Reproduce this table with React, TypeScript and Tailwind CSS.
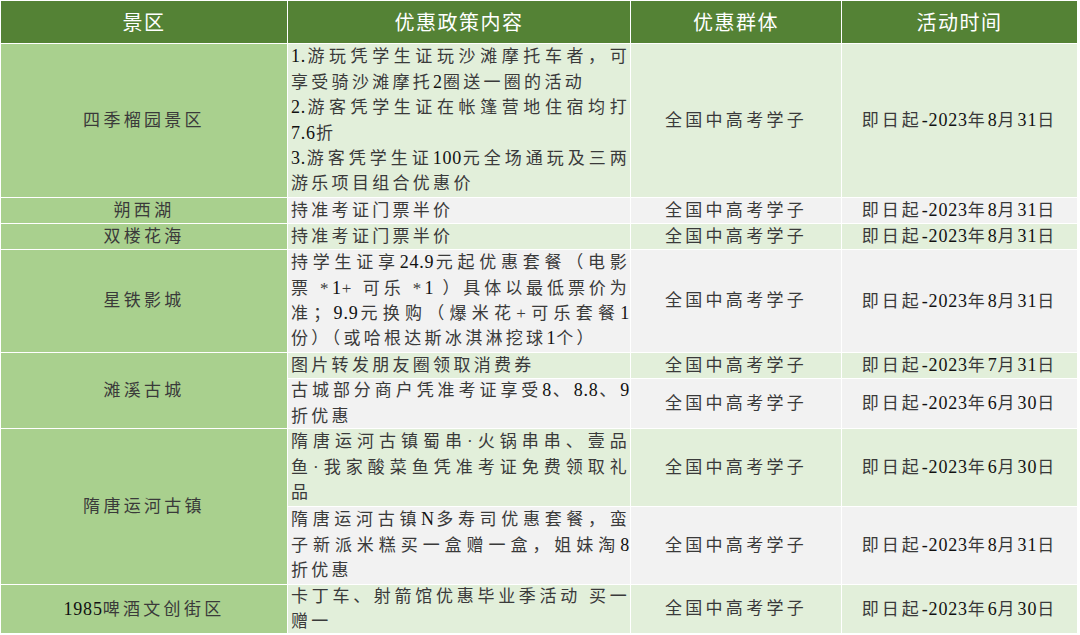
import React from "react";

type Line = { t: string; j?: boolean };
type Sub = { lines: Line[]; time: string };
type Row = { name: string; subs: Sub[] };

const rows: Row[] = [
  {
    name: "四季榴园景区",
    subs: [
      {
        lines: [
          { t: "1.游玩凭学生证玩沙滩摩托车者，可", j: true },
          { t: "享受骑沙滩摩托2圈送一圈的活动" },
          { t: "2.游客凭学生证在帐篷营地住宿均打", j: true },
          { t: "7.6折" },
          { t: "3.游客凭学生证100元全场通玩及三两", j: true },
          { t: "游乐项目组合优惠价" },
        ],
        time: "即日起-2023年8月31日",
      },
    ],
  },
  { name: "朔西湖", subs: [{ lines: [{ t: "持准考证门票半价" }], time: "即日起-2023年8月31日" }] },
  { name: "双楼花海", subs: [{ lines: [{ t: "持准考证门票半价" }], time: "即日起-2023年8月31日" }] },
  {
    name: "星铁影城",
    subs: [
      {
        lines: [
          { t: "持学生证享24.9元起优惠套餐（电影", j: true },
          { t: "票 *1+ 可乐 *1 ）具体以最低票价为", j: true },
          { t: "准；9.9元换购（爆米花+可乐套餐1", j: true },
          { t: "份）（或哈根达斯冰淇淋挖球1个）" },
        ],
        time: "即日起-2023年8月31日",
      },
    ],
  },
  {
    name: "滩溪古城",
    subs: [
      { lines: [{ t: "图片转发朋友圈领取消费券" }], time: "即日起-2023年7月31日" },
      {
        lines: [{ t: "古城部分商户凭准考证享受8、8.8、9", j: true }, { t: "折优惠" }],
        time: "即日起-2023年6月30日",
      },
    ],
  },
  {
    name: "隋唐运河古镇",
    subs: [
      {
        lines: [
          { t: "隋唐运河古镇蜀串·火锅串串、壹品", j: true },
          { t: "鱼·我家酸菜鱼凭准考证免费领取礼", j: true },
          { t: "品" },
        ],
        time: "即日起-2023年6月30日",
      },
      {
        lines: [
          { t: "隋唐运河古镇N多寿司优惠套餐，蛮", j: true },
          { t: "子新派米糕买一盒赠一盒，姐妹淘8", j: true },
          { t: "折优惠" },
        ],
        time: "即日起-2023年8月31日",
      },
    ],
  },
  {
    name: "1985啤酒文创街区",
    subs: [
      {
        lines: [{ t: "卡丁车、射箭馆优惠毕业季活动 买一", j: true }, { t: "赠一" }],
        time: "即日起-2023年6月30日",
      },
    ],
  },
];

function Txt({ s }: { s: string }) {
  const parts = s.match(/[0-9A-Za-z.\-]+|[^0-9A-Za-z.\-]+/g) || [];
  return (
    <>
      {parts.map((p, i) =>
        /^[0-9A-Za-z.\-]+$/.test(p) ? (
          <span key={i} className="text-[18px] tracking-[0.8px] text-[#111]">
            {p}
          </span>
        ) : (
          <span key={i}>{p}</span>
        )
      )}
    </>
  );
}

const rowBg = (i: number) => (i % 2 === 0 ? "bg-[#e2efda]" : "bg-[#f2f2f2]");

export default function App() {
  let subIdx = 0;
  const cells: React.ReactNode[] = [];
  rows.forEach((r, ri) => {
    r.subs.forEach((s, si) => {
      const bg = rowBg(subIdx);
      subIdx++;
      if (si === 0) {
        cells.push(
          <div
            key={`n${ri}`}
            className={`flex items-center justify-center bg-[#a9d08e] ${r.subs.length === 2 ? "row-span-2" : ""}`}
          >
            <span className="tracking-[3.3px]">
              <Txt s={r.name} />
            </span>
          </div>
        );
      }
      cells.push(
        <div key={`c${ri}-${si}`} className={`flex flex-col justify-center pl-[3px] pr-[0px] ${bg}`}>
          {s.lines.map((l, li) => (
            <div
              key={li}
              className={`leading-[25.4px] tracking-[3.3px] whitespace-nowrap ${l.j ? "text-justify [text-align-last:justify]" : ""}`}
            >
              <Txt s={l.t} />
            </div>
          ))}
        </div>
      );
      cells.push(
        <div key={`g${ri}-${si}`} className={`flex items-center justify-center ${bg}`}>
          <span className="tracking-[3.3px]">全国中高考学子</span>
        </div>
      );
      cells.push(
        <div key={`t${ri}-${si}`} className={`flex items-center justify-center ${bg}`}>
          <span className="tracking-[3px]">
            <Txt s={s.time} />
          </span>
        </div>
      );
    });
  });

  return (
    <div className="w-[1080px] h-[635px] bg-white overflow-hidden">
      <div
        className="grid grid-cols-[286px_342px_210px_235px] grid-rows-[42px_153px_25px_25px_102px_25px_49px_77px_77px_48px] gap-px p-px w-[1078px] bg-white text-[17px] text-[#3a3a3a]"
        style={{ fontFamily: '"Liberation Serif", "Noto Sans CJK SC", serif' }}
      >
        {["景区", "优惠政策内容", "优惠群体", "活动时间"].map((h) => (
          <div
            key={h}
            className="flex items-center justify-center bg-[#548235] text-white text-[20px] tracking-[1.5px] [font-family:'Noto_Sans_CJK_SC',sans-serif]"
          >
            {h}
          </div>
        ))}
        {cells}
      </div>
    </div>
  );
}
